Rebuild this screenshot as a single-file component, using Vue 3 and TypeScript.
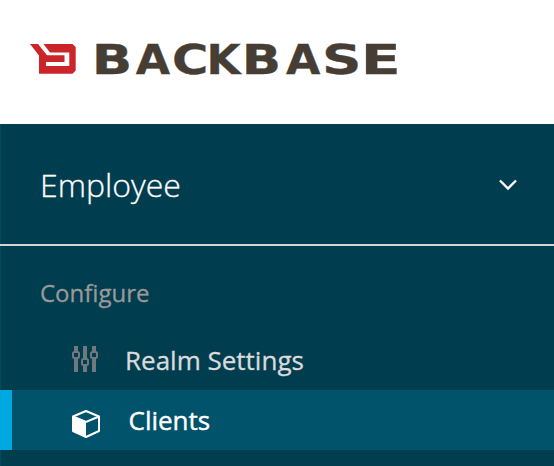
<script setup lang="ts">
interface NavItem {
  label: string
  icon: 'sliders' | 'cube'
  active: boolean
}

interface Glyph {
  char: string
  x: number
  scale: number
}

const realm: string = 'Employee'
const items: NavItem[] = [
  { label: 'Realm Settings', icon: 'sliders', active: false },
  { label: 'Clients', icon: 'cube', active: true },
]

// Widened letters of the wordmark
const wordmark: Glyph[] = [
  { char: 'B', x: 61.8, scale: 1.33 },
  { char: 'A', x: 105.7, scale: 1.11 },
  { char: 'C', x: 142, scale: 1.24 },
  { char: 'K', x: 176.5, scale: 1.1 },
  { char: 'B', x: 211.7, scale: 1.29 },
  { char: 'A', x: 256, scale: 1.11 },
  { char: 'S', x: 292, scale: 1.37 },
  { char: 'E', x: 330.8, scale: 1.46 },
]
</script>

<template>
  <div class="page">
    <header class="brand">
      <svg class="logo" width="370" height="34" viewBox="0 0 370 34">
        <path
          fill="#cc2529"
          d="M0 2H8L17 13.300H34.500V20H16V24H39.300V10.500H20L13.500 2H42.500L45.700 5V28.500L42.500 31.700H9V13.500Z"
        />
        <g class="wordmark">
          <text
            v-for="(glyph, index) in wordmark"
            :key="index"
            :transform="`translate(${glyph.x} 31.7) scale(${glyph.scale} 1)`"
          >{{ glyph.char }}</text>
        </g>
      </svg>
    </header>
    <aside class="sidebar">
      <div class="realm">
        <span>{{ realm }}</span>
        <svg class="chevron" width="20" height="14" viewBox="0 0 20 14">
          <path d="M2 2.500L10 10.500L18 2.500" fill="none" stroke="#fff" stroke-width="2.400" />
        </svg>
      </div>
      <nav>
        <h2>Configure</h2>
        <ul>
          <li v-for="item in items" :key="item.label" :class="{ active: item.active }">
            <svg v-if="item.icon === 'sliders'" class="sliders" width="28" height="28" viewBox="0 0 28 28">
              <g fill="none" stroke="#72797e">
                <path d="M4 0V6M4 12V26M13 0V13M13 19V26M22 0V6M22 12V26" stroke-width="4" />
                <rect x="1" y="6" width="6" height="6" rx="1.500" stroke-width="2" />
                <rect x="10" y="13" width="6" height="6" rx="1.500" stroke-width="2" />
                <rect x="19" y="6" width="6" height="6" rx="1.500" stroke-width="2" />
              </g>
            </svg>
            <svg v-else class="cube" width="28" height="28" viewBox="0 0 28 28">
              <path d="M14 1L27 6.500V21L14 27L1 21V6.500Z" fill="none" stroke="#fff" stroke-width="2" stroke-linejoin="round" />
              <path d="M1 6.500L14 12V27.500L1 21Z" fill="#fff" />
              <path d="M1 6.500L14 12L27 6.500" fill="none" stroke="#fff" stroke-width="2" />
            </svg>
            <span>{{ item.label }}</span>
          </li>
        </ul>
      </nav>
    </aside>
  </div>
</template>

<style>
body {
  margin: 0;
  overflow: hidden;
}
</style>

<style scoped>
.page {
  display: flex;
  flex-direction: column;
  height: 466px;
  overflow: hidden;
  background: #fff;
  font-family: "Open Sans", "Noto Sans", sans-serif;
}
.brand {
  box-sizing: border-box;
  height: 124px;
  padding: 42px 0 0 30px;
}
.logo {
  display: block;
  overflow: visible;
}
.wordmark {
  fill: #463e35;
  stroke: #463e35;
  stroke-width: 0.3px;
  font-family: "DejaVu Sans", sans-serif;
  font-size: 40px;
  font-weight: 700;
}
.sidebar {
  flex: 1;
  background: #003d4f;
  box-shadow: inset 1px 0 #004b5c;
}
.realm {
  box-sizing: border-box;
  display: flex;
  align-items: center;
  justify-content: space-between;
  height: 122px;
  padding: 0 36px 0 40px;
  border-bottom: 2px solid #d1d5d8;
  color: #fff;
  font-size: 32px;
  font-weight: 300;
  -webkit-text-stroke: 0.3px currentColor;
}
.chevron {
  display: block;
  margin-top: 2px;
}
h2 {
  margin: 0;
  padding: 30px 0 0 40px;
  color: #999;
  font-size: 24px;
  font-weight: 400;
  line-height: 34px;
  -webkit-text-stroke: 0.3px currentColor;
}
ul {
  margin: 0;
  padding: 20px 0 0;
  list-style: none;
}
li {
  box-sizing: border-box;
  display: flex;
  align-items: center;
  height: 60px;
  padding-left: 72px;
  color: #dbdbdb;
  font-size: 26px;
  line-height: 36px;
  -webkit-text-stroke: 0.3px currentColor;
}
li svg {
  flex: none;
  margin-right: 25px;
}
li.active {
  padding-left: 60px;
  border-left: 12px solid #00a8e1;
  background: #00536b;
  color: #fff;
  -webkit-text-stroke-width: 0.4px;
}
.cube {
  margin-top: 8px;
}
li .cube {
  margin-right: 28.5px;
}
</style>
